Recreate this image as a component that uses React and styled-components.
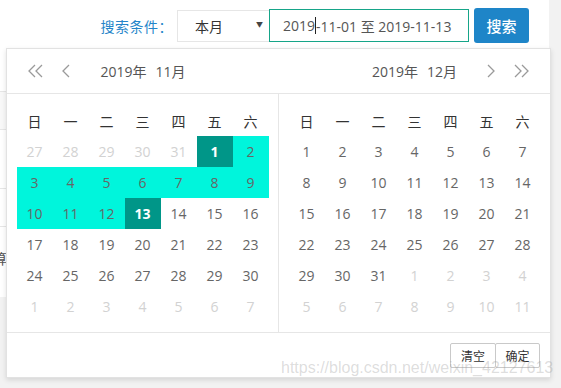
import React from 'react'
import styled, { createGlobalStyle } from 'styled-components'

const GlobalStyle = createGlobalStyle`
body{
  margin:0;
  font-family: "Open Sans", "Noto Sans CJK SC", sans-serif;
}
`

const Page = styled.div`
position: relative;
width: 561px;
height: 388px;
overflow: hidden;
background-color: #f2f2f2;
`

const Card = styled.div`
position: relative;
width: 549px;
height: 297px;
background-color: #fff;
`

const Toolbar = styled.div`
display: flex;
justify-content: flex-end;
align-items: center;
padding: 8px 20px 0 0;
height: 35px;
`

const Label = styled.span`
color: #2585c9;
font-size: 14px;
margin-right: 4px;
letter-spacing: 0.5px;
`

const Select = styled.div`
box-sizing: border-box;
width: 93px;
height: 32px;
border: 1px solid #e6e6e6;
display: flex;
align-items: center;
justify-content: space-between;
padding: 0 6px 0 17px;
font-size: 14px;
color: #333;
span{
  font-size: 7px;
  color: #444;
  margin-top: -4px;
}
`

const DateInput = styled.div`
box-sizing: border-box;
width: 200px;
height: 33px;
margin-left: -1px;
border: 1px solid #16a589;
display: flex;
align-items: center;
padding-left: 13px;
font-size: 14px;
color: #555;
white-space: pre;
`

const Caret = styled.i`
display: inline-block;
width: 1px;
height: 17px;
background-color: #222;
`

const SearchButton = styled.button`
box-sizing: border-box;
width: 55px;
height: 35px;
margin-left: 5px;
border: none;
border-radius: 3px;
background-color: #1e85c8;
color: #fff;
font-family: "Noto Sans CJK SC", sans-serif;
font-size: 15px;
font-weight: 500;
`

const Table = styled.div`
margin: 48px 0 0 -40px;
`

const Row = styled.div`
display: flex;
align-items: center;
box-sizing: border-box;
height: ${p => p.h}px;
padding-bottom: ${p => p.lift || 0}px;
border-top: 1px solid #e6e6e6;
background-color: ${p => p.head ? '#f8f8f8' : '#fff'};
padding-left: 19px;
font-size: 14px;
color: #555;
`

const Picker = styled.div`
position: absolute;
left: 6px;
top: 48px;
width: 545px;
box-sizing: border-box;
border: 1px solid #e2e2e2;
background-color: #fff;
box-shadow: 0 2px 5px rgba(0,0,0,0.12);
`

const Header = styled.div`
display: flex;
height: 44px;
border-bottom: 1px solid #e6e6e6;
`

const HeaderHalf = styled.div`
width: ${p => p.w}px;
display: flex;
align-items: center;
`

const Arrows = styled.div`
width: 63px;
box-sizing: border-box;
display: flex;
align-items: center;
gap: 19px;
justify-content: ${p => p.right ? 'flex-end' : 'flex-start'};
padding: ${p => p.right ? '0 21px 0 0' : '0 0 0 21px'};
svg{
  display: block;
}
`

const Title = styled.div`
flex: 1;
text-align: center;
font-size: 14px;
color: #555;
span + span{
  margin-left: 9px;
}
`

const Body = styled.div`
display: flex;
border-bottom: 1px solid #e6e6e6;
`

const Panel = styled.div`
width: ${p => p.w}px;
box-sizing: border-box;
display: flex;
justify-content: center;
padding: 11px 0 10px;
border-right: ${p => p.divider ? '1px solid #e6e6e6' : 'none'};
`

const Grid = styled.div`
display: grid;
grid-template-columns: repeat(7, 36px);
grid-auto-rows: 31px;
`

const Week = styled.div`
display: flex;
align-items: center;
justify-content: center;
font-size: 14px;
color: #333;
font-family: "Noto Sans CJK SC", sans-serif;
`

const colors = {
  muted: { bg: 'transparent', fg: '#d2d2d2' },
  normal: { bg: 'transparent', fg: '#666' },
  range: { bg: '#00f5dc', fg: '#666' },
  end: { bg: '#009688', fg: '#fff' },
}

const Day = styled.div`
display: flex;
align-items: center;
justify-content: center;
font-size: 14px;
background-color: ${p => colors[p.kind].bg};
color: ${p => colors[p.kind].fg};
font-weight: ${p => p.kind === 'end' ? 700 : 400};
`

const Footer = styled.div`
height: 44px;
display: flex;
justify-content: flex-end;
align-items: flex-start;
padding: 10px 10px 0 0;
box-sizing: border-box;
`

const FootButton = styled.button`
box-sizing: border-box;
width: ${p => p.w}px;
height: 25px;
padding: 0;
border: 1px solid #c9c9c9;
border-radius: 2px;
background-color: #fff;
color: #333;
font-family: "Noto Sans CJK SC", sans-serif;
font-size: 12px;
& + &{
  margin-left: -1px;
}
`

const Watermark = styled.div`
position: absolute;
left: 281px;
top: 359px;
font-family: "Liberation Sans", Arial, sans-serif;
font-size: 16px;
color: rgba(150,150,150,0.32);
white-space: nowrap;
`

const weekdays = ['日', '一', '二', '三', '四', '五', '六']

const Double = ({ flip }) => (
  <svg width="15" height="14" viewBox="0 0 15 14">
    <g fill="none" stroke="#9a9a9a" strokeWidth="1.3" transform={flip ? 'translate(15 0) scale(-1 1)' : undefined}>
      <polyline points="7,1 1,7 7,13" />
      <polyline points="14,1 8,7 14,13" />
    </g>
  </svg>
)

const Single = ({ flip }) => (
  <svg width="8" height="14" viewBox="0 0 8 14">
    <polyline points={flip ? '1,1 7,7 1,13' : '7,1 1,7 7,13'} fill="none" stroke="#9a9a9a" strokeWidth="1.3" />
  </svg>
)

const nov = [
  ...[27, 28, 29, 30, 31].map(d => ({ d, kind: 'muted' })),
  ...Array.from({ length: 30 }, (_, i) => {
    const d = i + 1
    let kind = 'normal'
    if (d === 1 || d === 13) kind = 'end'
    else if (d < 13) kind = 'range'
    return { d, kind }
  }),
  ...[1, 2, 3, 4, 5, 6, 7].map(d => ({ d, kind: 'muted' })),
]

const dec = [
  ...Array.from({ length: 31 }, (_, i) => ({ d: i + 1, kind: 'normal' })),
  ...Array.from({ length: 11 }, (_, i) => ({ d: i + 1, kind: 'muted' })),
]

const Month = ({ days }) => (
  <Grid>
    {weekdays.map(w => <Week key={w}>{w}</Week>)}
    {days.map((x, i) => <Day key={i} kind={x.kind}>{x.d}</Day>)}
  </Grid>
)

export default function App() {
  return (
    <Page>
      <GlobalStyle />
      <Card>
        <Toolbar>
          <Label>搜索条件：</Label>
          <Select>本月<span>▼</span></Select>
          <DateInput>2019<Caret />-11-01 至 2019-11-13</DateInput>
          <SearchButton>搜索</SearchButton>
        </Toolbar>
        <Table>
          <Row h={38} head />
          <Row h={59} />
          <Row h={38} />
          <Row h={71} lift={9}>计算</Row>
        </Table>
        <Picker>
          <Header>
            <HeaderHalf w={272}>
              <Arrows><Double /><Single /></Arrows>
              <Title><span>2019年</span><span>11月</span></Title>
              <Arrows right />
            </HeaderHalf>
            <HeaderHalf w={271}>
              <Arrows />
              <Title><span>2019年</span><span>12月</span></Title>
              <Arrows right><Single flip /><Double flip /></Arrows>
            </HeaderHalf>
          </Header>
          <Body>
            <Panel w={272} divider><Month days={nov} /></Panel>
            <Panel w={271}><Month days={dec} /></Panel>
          </Body>
          <Footer>
            <FootButton w={46}>清空</FootButton>
            <FootButton w={45}>确定</FootButton>
          </Footer>
        </Picker>
      </Card>
      <Watermark>https://blog.csdn.net/weixin_42127613</Watermark>
    </Page>
  )
}
